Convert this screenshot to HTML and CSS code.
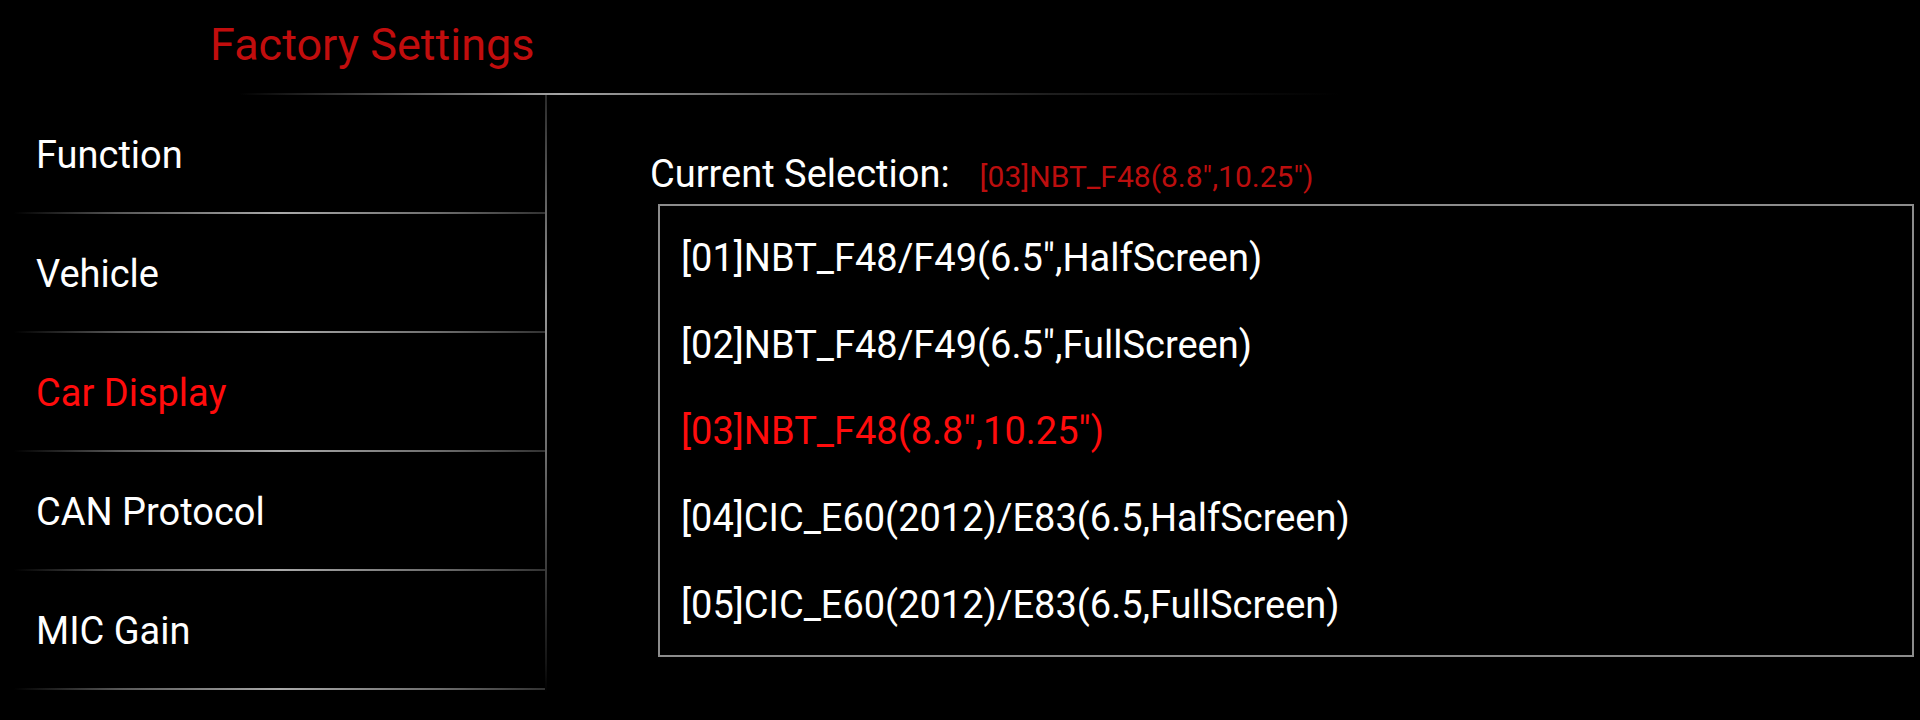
FILE: index.html
```html
<!DOCTYPE html>
<html lang="en">
<head>
<meta charset="utf-8">
<title>Factory Settings</title>
<link rel="stylesheet" href="styles.css">
</head>
<body>
<div class="screen">
  <header class="top">
    <h1 class="title">Factory Settings</h1>
  </header>
  <div class="main">
    <nav class="side">
      <div class="side-item">Function</div>
      <div class="side-item">Vehicle</div>
      <div class="side-item active">Car Display</div>
      <div class="side-item">CAN Protocol</div>
      <div class="side-item">MIC Gain</div>
    </nav>
    <section class="content">
      <div class="current">
        <span class="current-label">Current Selection:</span>
        <span class="current-value">[03]NBT_F48(8.8",10.25")</span>
      </div>
      <ul class="options">
        <li class="option">[01]NBT_F48/F49(6.5",HalfScreen)</li>
        <li class="option">[02]NBT_F48/F49(6.5",FullScreen)</li>
        <li class="option selected">[03]NBT_F48(8.8",10.25")</li>
        <li class="option">[04]CIC_E60(2012)/E83(6.5,HalfScreen)</li>
        <li class="option">[05]CIC_E60(2012)/E83(6.5,FullScreen)</li>
      </ul>
    </section>
  </div>
</div>
</body>
</html>
```

FILE: styles.css
```css
html, body {
  margin: 0;
  padding: 0;
  background: #000;
}

body {
  font-family: Roboto, "Liberation Sans", sans-serif;
  color: #fff;
  width: 1920px;
  height: 720px;
  overflow: hidden;
}

.screen {
  display: flex;
  flex-direction: column;
  height: 720px;
}

.top {
  height: 93px;
  border-bottom: 2px solid;
  border-image: linear-gradient(90deg,
    rgba(0,0,0,0) 0px,
    rgba(0,0,0,0) 240px,
    rgba(120,120,120,0.7) 400px,
    rgba(165,165,165,1) 560px,
    rgba(120,120,120,0.8) 760px,
    rgba(50,50,50,0.6) 1050px,
    rgba(0,0,0,0) 1340px,
    rgba(0,0,0,0) 1920px) 1;
  display: flex;
  align-items: flex-start;
}

.title {
  margin: 0;
  padding: 19px 0 0 210px;
  font-size: 45px;
  font-weight: 400;
  line-height: 52px;
  color: #c10d0d;
}

.main {
  display: flex;
  flex: 1;
  min-height: 0;
}

.side {
  width: 545px;
  flex: none;
  display: flex;
  flex-direction: column;
  border-right: 2px solid;
  border-image: linear-gradient(180deg,
    rgba(70,70,70,0.6) 0%,
    rgba(150,150,150,1) 35%,
    rgba(120,120,120,0.9) 60%,
    rgba(40,40,40,0.5) 95%,
    rgba(0,0,0,0) 100%) 1;
  margin-bottom: 28px;
}

.side-item {
  flex: none;
  display: flex;
  align-items: center;
  padding: 3px 0 0 36px;
  box-sizing: border-box;
  height: 119px;
  font-size: 38px;
  border-bottom: 2px solid;
  border-image: linear-gradient(90deg,
    rgba(0,0,0,0) 0px,
    rgba(0,0,0,0) 15px,
    rgba(110,110,110,0.8) 120px,
    rgba(170,170,170,1) 280px,
    rgba(120,120,120,0.9) 440px,
    rgba(70,70,70,0.7) 100%) 1;
}

.side-item.active {
  color: #ff0c0c;
}

.content {
  flex: 1;
  display: flex;
  flex-direction: column;
  padding: 0 6px 0 103px;
}

.current {
  display: flex;
  align-items: baseline;
  height: 109px;
  padding-top: 57px;
  box-sizing: border-box;
}

.current-label {
  font-size: 38px;
  line-height: 44px;
}

.current-value {
  margin-left: 30px;
  font-size: 30px;
  line-height: 40px;
  color: #bb0e0e;
}

.options {
  list-style: none;
  margin: 0 0 0 8px;
  padding: 9px 0 0 21px;
  height: 453px;
  box-sizing: border-box;
  border: 2px solid #8c8c8c;
}

.option {
  height: 86.6px;
  display: flex;
  align-items: center;
  font-size: 38px;
}

.option.selected {
  color: #ff0c0c;
}
```
